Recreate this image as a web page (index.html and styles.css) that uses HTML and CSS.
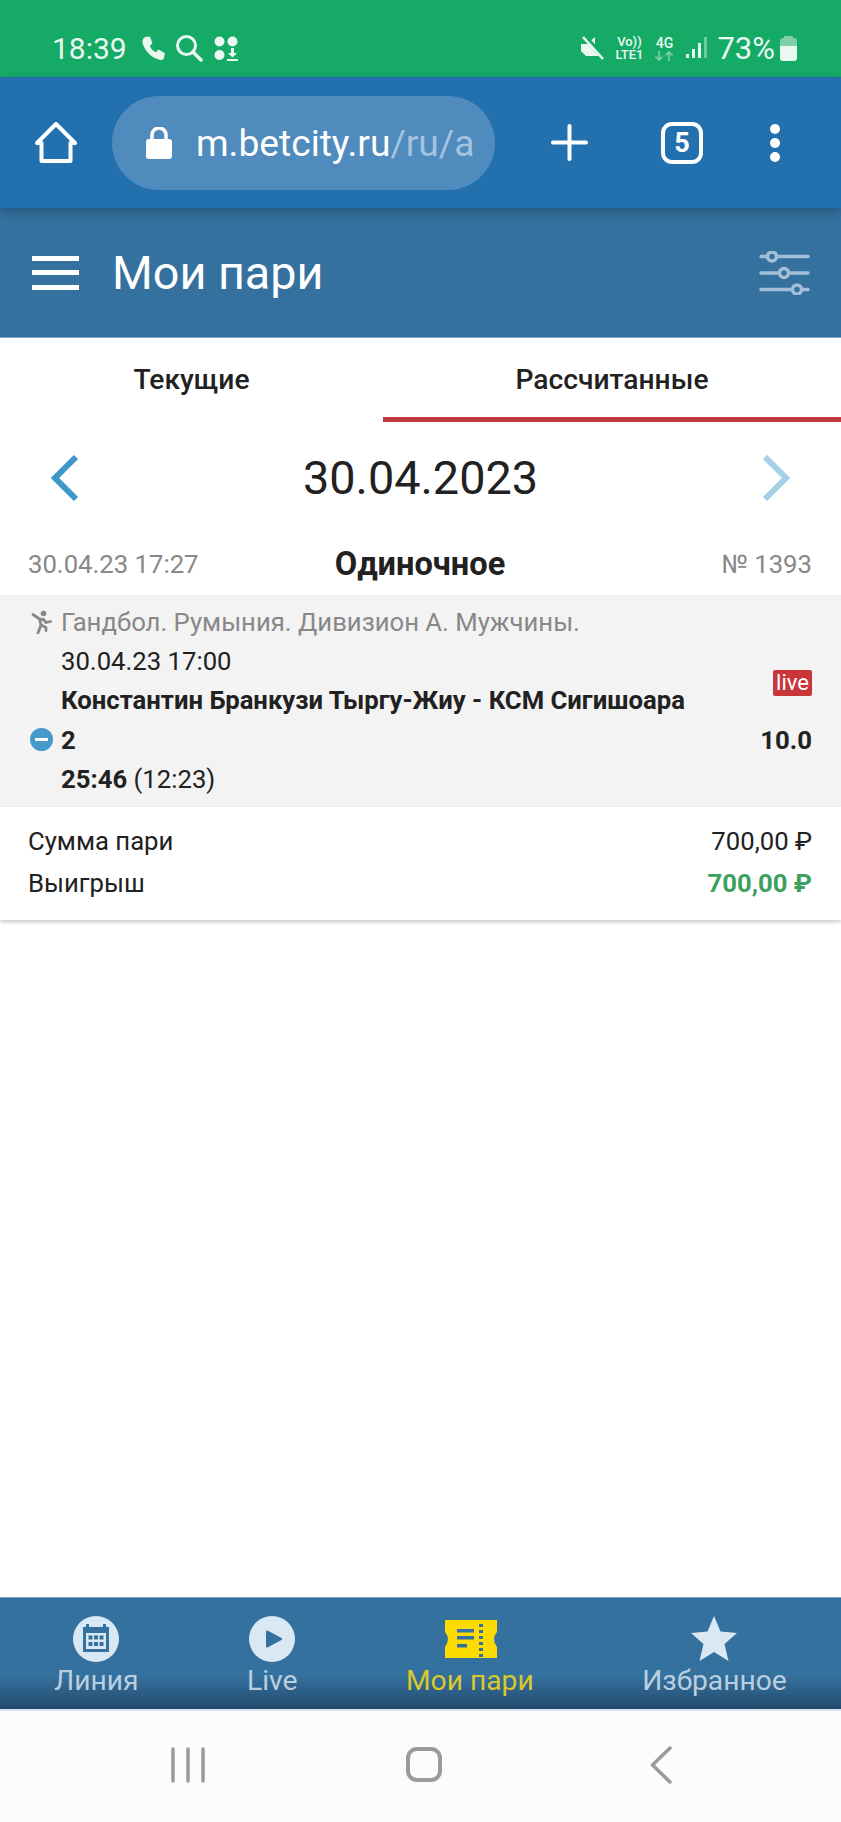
FILE: index.html
```html
<!DOCTYPE html>
<html lang="ru">
<head>
<meta charset="utf-8">
<title>Мои пари</title>
<link rel="stylesheet" href="styles.css">
</head>
<body>
<div class="page">
  <div class="status">
    <div class="status-group">
      <span class="clock">18:39</span>
      <svg class="ic-phone" viewBox="0 0 24 24"><path d="M4 1 8.500 .5 11 7 8.500 9.500c1.200 2.800 3 4.700 5.700 6L17 13l6 3.500-1 4.500c-.5 1.500-2 2.500-3.500 2-8-1.500-14.500-8-17-16C1.200 5 1.500 2.500 4 1z" fill="#e9f9f1"/></svg>
      <svg class="ic-search" viewBox="0 0 28 28"><circle cx="11.500" cy="11.500" r="9" fill="none" stroke="#e9f9f1" stroke-width="3"/><path d="m18 18 8 8" stroke="#e9f9f1" stroke-width="3.500" stroke-linecap="round"/></svg>
      <svg class="ic-apps" viewBox="0 0 24 25"><circle cx="5.500" cy="5.500" r="5" fill="#e9f9f1"/><circle cx="18.500" cy="5.500" r="5" fill="#e9f9f1"/><circle cx="5.500" cy="19" r="5" fill="#e9f9f1"/><path d="M17 12h3v5h3l-4.500 4.500L14 17h3zM13 23h11v2H13z" fill="#e9f9f1"/></svg>
    </div>
    <div class="status-group status-right">
      <svg class="ic-mute" viewBox="0 0 24 24"><path d="M1 8h6l8-7v14l4 5H6L1 15z" fill="#e9f9f1"/><path d="M5 1l19 21" stroke="#16aa67" stroke-width="5"/><path d="M3 1l20 22" stroke="#e9f9f1" stroke-width="2.500"/></svg>
      <span class="net"><span>Vo))</span><span>LTE1</span></span>
      <span class="net-4g"><span>4G</span><svg class="ic-arrows" viewBox="0 0 20 10"><path d="M5 0v9M1.500 5.500 5 9l3.500-3.500M15 10V1M11.500 4.500 15 1l3.500 3.500" fill="none" stroke="#7fd0a8" stroke-width="1.600"/></svg></span>
      <svg class="ic-signal" viewBox="0 0 22 22"><rect x="0" y="17" width="3" height="4" fill="#e9f9f1"/><rect x="6" y="12" width="3" height="9" fill="#e9f9f1"/><rect x="12" y="6" width="3" height="15" fill="#e9f9f1"/><rect x="18" y="0" width="3" height="21" fill="#6fcb9f"/></svg>
      <span class="battery-text">73%</span>
      <span class="battery"><span class="battery-nub"></span><span class="battery-cap"></span><span class="battery-fill"></span></span>
    </div>
  </div>

  <div class="browser">
    <svg class="ic-home" viewBox="0 0 42 42"><path d="M21 2 40 21h-4.500v18h-29V21H2z" fill="none" stroke="#fff" stroke-width="4" stroke-linejoin="round"/></svg>
    <div class="url">
      <svg class="ic-lock" viewBox="0 0 26 32"><path d="M6 13V8a7 7 0 0 1 14 0v5" fill="none" stroke="#fff" stroke-width="3.500"/><rect y="12" width="26" height="20" rx="3" fill="#fff"/></svg>
      <span class="url-text">m.betcity.ru<span class="url-path">/ru/a</span></span>
    </div>
    <svg class="ic-plus" viewBox="0 0 37 37"><path d="M18.500 2v33M2 18.500h33" stroke="#fff" stroke-width="4" stroke-linecap="round"/></svg>
    <span class="tabs-count">5</span>
    <svg class="ic-dots" viewBox="0 0 12 38"><circle cx="6" cy="5" r="5" fill="#fff"/><circle cx="6" cy="19" r="5" fill="#fff"/><circle cx="6" cy="33" r="5" fill="#fff"/></svg>
  </div>

  <header class="app-header">
    <div class="burger"><span></span><span></span><span></span></div>
    <h1 class="app-title">Мои пари</h1>
    <svg class="ic-filter" viewBox="0 0 51 44"><g fill="none" stroke="#a3bfd8" stroke-width="3.500" stroke-linecap="round"><path d="M2 5.500h5M19 5.500h30M2 22h17M31 22h18M2 38.500h30M44 38.500h5"/><circle cx="13" cy="5.500" r="4.500"/><circle cx="25" cy="22" r="4.500"/><circle cx="38" cy="38.500" r="4.500"/></g></svg>
  </header>

  <nav class="tabs">
    <div class="tab">Текущие</div>
    <div class="tab tab-active">Рассчитанные</div>
  </nav>

  <main class="content">
    <div class="date-row">
      <svg class="chev" viewBox="0 0 30 48"><path d="M27 3 6 24l21 21" fill="none" stroke="#3d97c8" stroke-width="6"/></svg>
      <div class="date">30.04.2023</div>
      <svg class="chev" viewBox="0 0 30 48"><path d="M3 3l21 21L3 45" fill="none" stroke="#a5d0e6" stroke-width="6"/></svg>
    </div>

    <section class="bet">
      <div class="bet-head">
        <span class="muted">30.04.23 17:27</span>
        <span class="bet-type">Одиночное</span>
        <span class="muted bet-number">№ 1393</span>
      </div>
      <div class="event">
        <svg class="ic-sport" viewBox="0 0 22 24"><circle cx="13.500" cy="3.500" r="2.800" fill="#888"/><path d="M3 4.500 9.500 9l1.500 6M9.500 9l4 .5 2.500 3 4.500-1M11 15l-3 8M11 15l5 2.500v3" fill="none" stroke="#888" stroke-width="2.800" stroke-linejoin="round" stroke-linecap="round"/></svg>
        <div class="event-line event-league muted">Гандбол. Румыния. Дивизион А. Мужчины.</div>
        <div class="event-line event-date">30.04.23 17:00</div>
        <div class="event-line event-teams strong">Константин Бранкузи Тыргу-Жиу - КСМ Сигишоара</div>
        <span class="live">live</span>
        <svg class="ic-minus" viewBox="0 0 23 23"><circle cx="11.500" cy="11.500" r="11.500" fill="#449bcb"/><rect x="5" y="10" width="13" height="3" fill="#fff"/></svg>
        <div class="event-line event-pick strong">2</div>
        <div class="event-line event-odds strong">10.0</div>
        <div class="event-line event-score"><span class="strong">25:46</span> (12:23)</div>
      </div>
      <div class="summary">
        <div class="summary-row"><span>Сумма пари</span><span>700,00 ₽</span></div>
        <div class="summary-row"><span>Выигрыш</span><span class="win">700,00 ₽</span></div>
      </div>
    </section>
  </main>

  <footer class="bottom-nav">
    <div class="nav-item">
      <svg class="nav-ic" viewBox="0 0 46 46"><circle cx="23" cy="23" r="23" fill="#dae8f3"/><path d="M10 11h3V8h3v3h14V8h3v3h3v25H10z" fill="#35719f"/><rect x="13" y="17" width="20" height="16" fill="#dae8f3"/><g fill="#35719f"><rect x="15.500" y="19.500" width="4" height="4"/><rect x="21" y="19.500" width="4" height="4"/><rect x="26.500" y="19.500" width="4" height="4"/><rect x="15.500" y="26" width="4" height="4"/><rect x="21" y="26" width="4" height="4"/><rect x="26.500" y="26" width="4" height="4"/></g></svg>
      <span>Линия</span>
    </div>
    <div class="nav-item">
      <svg class="nav-ic" viewBox="0 0 46 46"><circle cx="23" cy="23" r="23" fill="#dae8f3"/><path d="M18 15.500 32 23l-14 7.500z" fill="#35719f" stroke="#35719f" stroke-width="2" stroke-linejoin="round"/></svg>
      <span>Live</span>
    </div>
    <div class="nav-item nav-active">
      <svg class="nav-ic nav-ticket" viewBox="0 0 52 46"><path d="M0 4h52v12q-6 7 0 15v11H0V31q6-8 0-15z" fill="#fedb00"/><g fill="#35719f"><rect x="12" y="13" width="17" height="3.500"/><rect x="12" y="20" width="17" height="3.500"/><rect x="12" y="28" width="10" height="3.500"/><rect x="34" y="8" width="4" height="3"/><rect x="34" y="14" width="4" height="3"/><rect x="34" y="20" width="4" height="3"/><rect x="34" y="26" width="4" height="3"/><rect x="34" y="32" width="4" height="3"/><rect x="34" y="38" width="4" height="3"/></g></svg>
      <span>Мои пари</span>
    </div>
    <div class="nav-item">
      <svg class="nav-ic" viewBox="0 0 46 46"><path d="M23 0l6.500 15.500L46 17 33.500 28l4 17L23 36 8.500 45l4-17L0 17l16.500-1.500z" fill="#dae8f3"/></svg>
      <span>Избранное</span>
    </div>
  </footer>

  <div class="android">
    <svg class="ic-recents" viewBox="0 0 34 36"><path d="M2 2v32M17 2v32M32 2v32" stroke="#9a9a9a" stroke-width="3.500" stroke-linecap="round"/></svg>
    <span class="ic-square"></span>
    <svg class="ic-back" viewBox="0 0 22 38"><path d="M20 2 2.500 19 20 36" fill="none" stroke="#9a9a9a" stroke-width="3.500" stroke-linecap="round" stroke-linejoin="round"/></svg>
  </div>
</div>
</body>
</html>
```
FILE: styles.css
```css
* { box-sizing: border-box; }
html, body { margin: 0; padding: 0; }
body { font-family: Roboto, "Liberation Sans", sans-serif; color: #212121; background: #fff; }
.page { width: 841px; height: 1822px; display: flex; flex-direction: column; overflow: hidden; }

/* status bar */
.status { height: 77px; background: #16aa67; color: #e9f9f1; display: flex; justify-content: space-between; align-items: center; padding: 19px 44px 0 52px; flex: none; }
.status-group { display: flex; align-items: center; }
.clock { font-size: 30px; width: 89px; }
.ic-phone { width: 25px; height: 25px; }
.ic-search { width: 28px; height: 28px; margin-left: 9px; }
.ic-apps { width: 24px; height: 25px; margin-left: 11px; }
.ic-mute { width: 24px; height: 24px; }
.net { display: flex; flex-direction: column; align-items: center; font-size: 13px; font-weight: 500; line-height: 13px; margin-left: 9px; width: 32px; }
.net-4g { display: flex; flex-direction: column; align-items: center; font-size: 14px; font-weight: 500; line-height: 14px; margin-left: 8px; width: 22px; }
.ic-arrows { width: 20px; height: 10px; margin-top: 1px; }
.ic-signal { width: 22px; height: 22px; margin-left: 11px; }
.battery-text { font-size: 31px; margin-left: 9px; }
.battery { display: flex; flex-direction: column; align-items: center; width: 17px; height: 25px; margin-left: 5px; }
.battery-nub { width: 9px; height: 2px; background: #7fd0a8; border-radius: 1px 1px 0 0; }
.battery-cap { width: 17px; height: 8px; background: #7fd0a8; border-radius: 3px 3px 0 0; }
.battery-fill { width: 17px; height: 15px; background: #e9f9f1; border-radius: 0 0 3px 3px; }

/* browser bar */
.browser { height: 131px; background: #2271ae; display: flex; align-items: center; padding: 0 0 0 35px; flex: none; position: relative; z-index: 2; box-shadow: 0 4px 9px rgba(20, 50, 80, .45); }
.ic-home { width: 42px; height: 42px; }
.url { width: 383px; height: 94px; margin-left: 35px; border-radius: 47px; background: #4f8bbd; display: flex; align-items: center; padding-left: 34px; overflow: hidden; flex: none; }
.ic-lock { width: 26px; height: 32px; flex: none; }
.url-text { font-size: 37.200px; color: #fff; margin-left: 24px; white-space: nowrap; }
.url-path { color: #a3c3df; }
.ic-plus { width: 37px; height: 37px; margin-left: 56px; }
.tabs-count { width: 42px; height: 42px; margin-left: 73px; border: 4px solid #fff; border-radius: 11px; color: #fff; font-size: 27px; font-weight: 700; display: flex; align-items: center; justify-content: center; }
.ic-dots { width: 12px; height: 38px; margin-left: 66px; }

/* app header */
.app-header { height: 130px; background: #35719f; display: flex; align-items: center; padding: 0 31px 0 32px; flex: none; border-bottom: 1px solid #7ea6c5; }
.burger { width: 47px; display: flex; flex-direction: column; gap: 9.500px; }
.burger span { display: block; height: 5px; background: #fff; }
.app-title { flex: 1; margin: 0 0 0 33px; font-size: 46.700px; font-weight: 400; color: #fff; }
.ic-filter { width: 51px; height: 44px; }

/* tabs */
.tabs { height: 84px; display: grid; grid-template-columns: 383px 1fr; flex: none; }
.tab { display: flex; align-items: center; justify-content: center; font-size: 28.200px; font-weight: 500; padding-top: 3px; border-bottom: 5px solid transparent; }
.tab-active { border-bottom-color: #bf3a3c; }

/* content */
.content { flex: 1; min-height: 0; }
.date-row { height: 118px; display: flex; align-items: center; justify-content: space-between; padding: 0 49px 6px 49px; }
.chev { width: 30px; height: 48px; }
.date { font-size: 46.800px; }
.bet-head { height: 55px; display: grid; grid-template-columns: 1fr auto 1fr; align-items: center; padding: 0 29px 8px 28px; font-size: 25.700px; }
.bet-number { justify-self: end; }
.muted { color: #888; }
.bet-type { font-size: 32.600px; font-weight: 700; }
.strong { font-weight: 700; }
.event { background: #f3f3f3; display: grid; grid-template-columns: 31px 1fr auto; grid-template-rows: repeat(5, 39.300px); align-items: center; padding: 7px 29px 9px 30px; font-size: 25.700px; }
.event-line { grid-column: 2; white-space: nowrap; }
.ic-sport { grid-column: 1; grid-row: 1; width: 22px; height: 24px; }
.event-league { grid-row: 1; grid-column: 2 / 4; }
.event-date { grid-row: 2; }
.event-teams { grid-row: 3; }
.live { grid-column: 3; grid-row: 2 / 4; justify-self: end; background: #c8363a; color: #fff; font-size: 22px; line-height: 26px; height: 26px; padding: 0 3px; border-radius: 2px; margin-top: 4px; }
.ic-minus { grid-column: 1; grid-row: 4; width: 23px; height: 23px; }
.event-pick { grid-row: 4; }
.event-odds { grid-column: 3; grid-row: 4; justify-self: end; }
.event-score { grid-row: 5; }
.summary { padding: 13px 29px 16px 28px; box-shadow: 0 2px 4px rgba(0, 0, 0, .22); font-size: 25.700px; }
.summary-row { display: flex; justify-content: space-between; height: 42px; line-height: 42px; }
.win { color: #3e9f5f; font-weight: 700; }

/* bottom nav */
.bottom-nav { height: 112px; flex: none; display: flex; justify-content: space-around; padding-top: 18px; background: linear-gradient(#2f6893 0, #35719f 2px, #35719f 70%, #234a6c 100%); border-top: 1px solid #7ea6c5; }
.nav-item { display: flex; flex-direction: column; align-items: center; font-size: 28.200px; line-height: 32px; color: #b9cfe0; }
.nav-ic { height: 46px; flex: none; margin-bottom: 3px; }
.nav-ticket { margin-left: 2px; }
.nav-active { color: #d9c92a; }

/* android nav */
.android { height: 113px; flex: none; background: #fcfbfe; border-top: 2px solid #dfe0ee; display: flex; align-items: center; padding: 0 169px 4px 171px; justify-content: space-between; }
.ic-recents { width: 34px; height: 36px; }
.ic-square { width: 36px; height: 35px; border: 4px solid #9a9a9a; border-radius: 11px; margin-right: 8px; }
.ic-back { width: 22px; height: 38px; }
```
